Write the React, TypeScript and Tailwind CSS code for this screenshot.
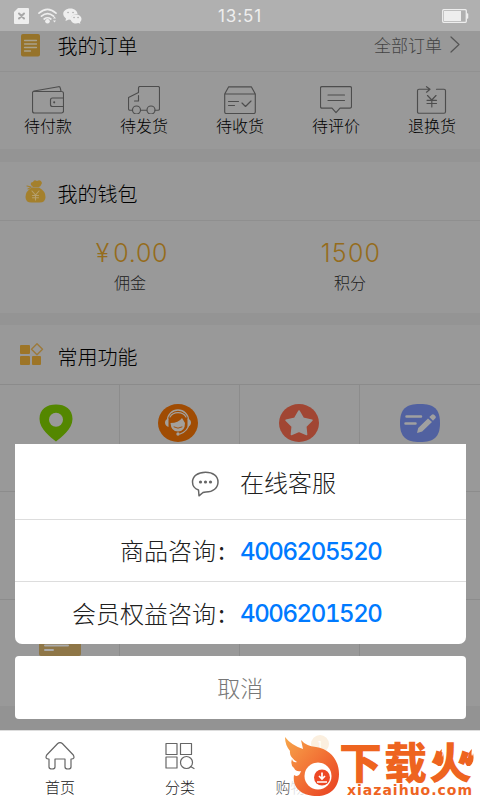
import React from 'react';

const Svg = ({ w, h, children, className = '' }: { w: number, h: number, children: React.ReactNode, className?: string }) => (
  <svg width={w} height={h} viewBox={`0 0 ${w} ${h}`} fill="none" strokeLinecap="round" strokeLinejoin="round" className={`shrink-0 ${className}`}>
    {children}
  </svg>
);

const orders = [
  {
    label: '待付款',
    icon: (
      <>
        <path d="M2 5.500h27.500q2 0 2 2v17.500q0 2-2 2h-27q-2 0-2-2v-18q0-1.500 1.500-2L26.500.7q1.500-.2 1.700 1l.8 3.500" />
        <path d="M31.500 12h-11q-2 0-2 2v4.500q0 2 2 2h11" />
        <circle cx="22.200" cy="16.300" r=".5" />
      </>
    ),
  },
  {
    label: '待发货',
    icon: (
      <>
        <path d="M4.500 24.200H2q-1.500 0-1.500-1.500V11.500l10-5V2q0-1.500 1.500-1.500h18q1.500 0 1.500 1.500v20.700q0 1.500-1.500 1.500h-3M12.500 24.200h6M10.500 9.500v5.500h-4" />
        <circle cx="8.500" cy="24" r="4" />
        <circle cx="23" cy="24" r="4" />
      </>
    ),
  },
  {
    label: '待收货',
    icon: (
      <path d="M.7 8v18q0 1.500 1.500 1.500h27.600q1.500 0 1.500-1.500V8L27.300.8H4.700L.7 8h30.600M4.500 15.500h10M4.500 19.500h6M18 17l3.500 3.500 5.500-5.500" />
    ),
  },
  {
    label: '待评价',
    icon: (
      <path d="M2 .6h28q1.500 0 1.500 1.500v18.500q0 1.500-1.500 1.500H20l-4 4.500-4-4.500H2q-1.500 0-1.500-1.500V2Q.5.600 2 .6ZM8 9h16.500M8 14.500h16.500" />
    ),
  },
  {
    label: '退换货',
    icon: (
      <path d="M20.500 3.200H28q1.500 0 1.500 1.500v21q0 1.500-1.500 1.500H3q-1.500 0-1.500-1.500v-21Q1.500 3.200 3 3.200h11M10.500.7l3.500 2.500-3.500 3M11.500 9.500l4.300 4.500 4.200-4.500M15.800 14v7M11 14.300h9.500M11 17.500h9.500" />
    ),
  },
];

const features = [
  <Svg w={34} h={38} key="pin" className="ml-[-7px]">
    <path d="M17 37.500C12 33.500.5 25 .5 15 .5 5 8 .5 17 .5S33.500 5 33.500 15C33.500 25 22 33.500 17 37.500Z" fill="#548700" />
    <circle cx="17" cy="15.700" r="7" fill="#999" />
  </Svg>,
  <Svg w={40} h={38} key="service" className="ml-[-3px]">
    <ellipse cx="20" cy="19" rx="20" ry="19" fill="#a04c03" />
    <path d="M9.500 16a10.500 10 0 0 1 21 0M31 20q-1 7-9 10" stroke="#a3a09c" strokeWidth="1.300" />
    <path d="M12 13a9 8 0 0 1 16 0" stroke="#a3a09c" strokeWidth="1.200" />
    <path d="M10.500 14.500q-3.500 1-3.500 4t3.500 4.500ZM29.500 14.500q3.500 1 3.500 4t-3.500 4.500Z" fill="#a3a09c" />
    <path d="M12.500 19q8 0 11.500-5l3 5q0 8.500-7 8.500t-7.500-8.500Z" fill="#a3a09c" />
    <path d="M16 23q4 2.500 8 0" stroke="#a04c03" strokeWidth=".9" />
    <circle cx="20" cy="30" r="1.700" fill="#a3a09c" />
  </Svg>,
  <Svg w={40} h={38} key="star" className="ml-[-1px]">
    <ellipse cx="20" cy="19" rx="20" ry="19" fill="#a14633" />
    <path d="m20 7 4.200 7.200 8.800 2-6.200 6.200.8 8.100L20 27.300l-7.600 3.200.8-8.100L7 16.200l8.800-2Z" fill="#999" stroke="#999" strokeWidth="1.500" />
  </Svg>,
  <Svg w={40} h={38} key="write">
    <path d="M20 0C34 0 40 5 40 19S34 38 20 38 0 33 0 19 6 0 20 0Z" fill="#5161a0" />
    <path d="M6.500 12.500h14.500M5.500 19.500h10" stroke="#a0a0a0" strokeWidth="2.500" />
    <path d="m17 29 1.200-5L28 14.500l4 3.500-9.800 9.500ZM29.300 13l2.500-2.300q1.200-1 2.300 0l1.300 1.300q1 1.200 0 2.300L33 16.700Z" fill="#a0a0a0" />
  </Svg>,
  null, null, null, null,
  <Svg w={42} h={38} key="card" className="mt-[-1px]">
    <rect width="42" height="38" rx="2" fill="#8e7647" />
    <path d="M6 27.500h23M6 32h8" stroke="#aaa" strokeWidth="2" />
  </Svg>,
  null, null, null,
];

const SectionTitle = ({ icon, title, className }: { icon: React.ReactNode, title: string, className: string }) => (
  <div className={`flex shrink-0 items-center pl-5 text-[20px] font-light text-black ${className}`}>
    <div className="w-[37.500px]">{icon}</div>
    <span className="leading-none">{title}</span>
  </div>
);

const PhoneRow = ({ label, phone, className = '' }: { label: string, phone: string, className?: string }) => (
  <div className={`flex h-[62px] items-center ${className}`}>
    <span className="mt-[-1px] w-[215px] text-right">{label}<span className="inline-block w-[14px] pr-[5px] font-normal">:</span></span>
    <span className="mt-[2px] ml-[10px] font-[Inter,sans-serif] font-medium tracking-[-1.400px] text-[#007aff] tabular-nums">{phone}</span>
  </div>
);

const Flame = () => (
  <svg width="57" height="64" viewBox="0 0 57 64" className="shrink-0">
    <defs>
      <linearGradient id="flame" x1="0" y1="0" x2="1" y2="1">
        <stop offset="0" stopColor="#f7a64b" />
        <stop offset=".5" stopColor="#f27235" />
        <stop offset="1" stopColor="#e83e20" />
      </linearGradient>
    </defs>
    <path d="M1 2Q7 10 19 14L17 5Q22 11 32 12C46 14 55 25 55 39 55 53 46 61 33 61 18 61 8 53 10 40Q15 43 17 36 12 37 10 33 6 30 8 24 9 28 13 27 5 22 6 16 1 10 1 2Z" fill="url(#flame)" />
    <circle cx="34" cy="41" r="13.500" fill="#fff" />
    <circle cx="38" cy="42.500" r="8" fill="#ed4825" />
    <path d="M38 37.500v6m-3-2.500 3 3 3-3M33 47h10" fill="none" stroke="#fff" strokeWidth="1.700" />
  </svg>
);

const App = () => (
  <div className="relative flex h-[800px] w-[480px] flex-col overflow-hidden bg-[#999] font-['Noto_Sans_CJK_SC',sans-serif] text-[#202020]">
    {/* Status bar */}
    <header className="flex h-[31px] shrink-0 items-center bg-[#b0b0b0] pr-[11px] pl-[14px] text-[#eee]">
      <Svg w={15} h={16}>
        <path d="M4 0h10q1 0 1 1v14q0 1-1 1H1q-1 0-1-1V4Z" fill="#eee" />
        <path d="m5 5.500 5 5m0-5-5 5" stroke="#a8a8a8" strokeWidth="2" />
      </Svg>
      <Svg w={20} h={16} className="ml-[9px]">
        <path d="M1 5.200q8.500-7.500 17 0M3.500 8.200q6-5 12 0M6.200 11q3.300-2.500 6.600 0" stroke="#eee" strokeWidth="1.700" />
        <circle cx="9.500" cy="13.300" r="2.300" fill="#eee" />
        <path d="m15 10.500 1.500-2 1.500 2ZM15 12.500l1.500 2 1.500-2Z" fill="#eee" />
      </Svg>
      <Svg w={19} h={16} className="ml-[5px]">
        <path d="M7.500.5c4 0 7 2.500 7 5.500-4 0-7 2.500-6.500 6L6 11.500 2.500 13 3 10.500C-2 7 0 .5 7.500.5Z" fill="#eee" />
        <path d="M13 6.500c3 0 5.500 2 5.500 4.500q0 2-1.500 3.200l.3 1.600-2-.7q-1.200.4-2.300.4c-3 0-5.300-2-5.300-4.500s2.300-4.500 5.300-4.500Z" fill="#eee" />
        <path d="M5 4.500h.1M10 4.500h.1M11 9.500h.1M15 9.500h.1" stroke="#aaa" strokeWidth="1.500" />
      </Svg>
      <span className="ml-[136px] flex-1 pt-[2px] font-[Inter,sans-serif] text-[17px] leading-none tracking-[0.900px]">13:51</span>
      <Svg w={27} h={14}>
        <rect x=".7" y=".7" width="23.600" height="12.600" rx="1" stroke="#eee" strokeWidth="1.300" />
        <path d="M2 2h17v10H2Z" fill="#eee" />
        <path d="M25.500 5v4" stroke="#eee" strokeWidth="1.500" />
      </Svg>
    </header>

    {/* Orders */}
    <div className="flex h-[41px] shrink-0 items-start justify-between border-b border-[#919191] pr-[20px]">
      <SectionTitle
        className="mt-[3px] h-[23px]"
        title="我的订单"
        icon={
          <Svg w={21} h={23} className="ml-px">
            <rect width="19" height="22.500" rx="2" fill="#96732a" />
            <path d="M3.500 6.500h12M3.500 10h12M3.500 13.500h12M3.500 17h6" stroke="#aaa28c" strokeWidth="1.300" />
          </Svg>
        }
      />
      <div className="mt-[5px] flex items-center gap-[8px] text-[17px] leading-none font-light text-[#444]">
        全部订单
        <Svg w={10} h={17}><path d="m1 1 8 7.500L1 16" stroke="#555" strokeWidth="1.200" /></Svg>
      </div>
    </div>
    <div className="grid h-[77px] shrink-0 grid-cols-5 pt-[14px]">
      {orders.map(order => (
        <div key={order.label} className="flex flex-col items-center gap-[2px]">
          <Svg w={32} h={28}><g stroke="#4d4d4d" strokeWidth="1.150">{order.icon}</g></Svg>
          <span className="text-[16px] leading-[18px] font-light text-black">{order.label}</span>
        </div>
      ))}
    </div>
    <div className="h-[13px] shrink-0 bg-[#949494]" />

    {/* Wallet */}
    <SectionTitle
      className="h-[59px] border-b border-[#8f8f8f] pt-[5px]"
      title="我的钱包"
      icon={
        <Svg w={21} h={24} className="mt-[-3px] ml-[5px]">
          <path d="M6 5Q5 2 8 2q1-3 4-1 4-2 5 2-1 3-3 4H8ZM7 7.500h7Q20.500 11 20.500 17q0 5.500-6 5.500h-8Q.5 22.500.5 17 .5 11 7 7.500Z" fill="#a4802c" />
          <path d="m7 11 3.500 4 3.500-4M10.500 15v5M7.500 15.500h6M7.500 17.700h6" stroke="#b6a06e" strokeWidth="1.100" />
          <path d="m2 6 4 1M3 9l3-1.500" stroke="#a4802c" strokeWidth="1.100" />
        </Svg>
      }
    />
    <div className="flex h-[92px] shrink-0 pr-[20px] pl-[20px] text-center">
      <div className="w-[220px] pt-[19px]">
        <div className="flex h-[26px] items-center justify-center gap-[4px] font-[Inter,sans-serif] text-[25px] leading-[26px] text-[#956c1c]">
          <span className="font-light">¥</span>
          <span className="mr-[-4px] font-light tracking-[0.700px]">0.00</span>
        </div>
        <div className="mt-[8px] text-[16px] leading-[17px] font-light">佣金</div>
      </div>
      <div className="w-[220px] pt-[19px]">
        <div className="h-[26px] pl-[2px] font-[Inter,sans-serif] text-[25px] leading-[26px] font-light tracking-[1.200px] text-[#956c1c]">1500</div>
        <div className="mt-[8px] text-[16px] leading-[17px] font-light">积分</div>
      </div>
    </div>
    <div className="h-[12px] shrink-0 bg-[#949494]" />

    {/* Common features */}
    <SectionTitle
      className="h-[60px] border-b border-[#8b8b8b] pt-[5px]"
      title="常用功能"
      icon={
        <Svg w={24} h={23} className="mt-[-5px]">
          <path d="M1 2h8q1 0 1 1v7q0 1-1 1H1q-1 0-1-1V3Q0 2 1 2ZM1 13h8q1 0 1 1v7q0 1-1 1H1q-1 0-1-1v-7q0-1 1-1ZM13 13h7q1 0 1 1v7q0 1-1 1h-7q-1 0-1-1v-7q0-1 1-1Z" fill="#9d7527" />
          <path d="m17 .8 5.500 5.500-5.500 5.500-5.500-5.500Z" stroke="#9d7a3a" strokeWidth="1.400" />
        </Svg>
      }
    />
    <div className="grid h-[321px] shrink-0 grid-cols-4 grid-rows-[107px_108px_106px]">
      {features.map((icon, i) => (
        <div key={i} className="flex justify-center border-r border-b border-[#8c8c8c] pt-[19px] nth-[4n]:border-r-0 nth-[n+9]:border-b-0">{icon}</div>
      ))}
    </div>
    <div className="h-[24px] shrink-0 bg-[#939393]" />

    {/* Bottom tabs */}
    <nav className="grid h-[70px] shrink-0 grid-cols-4 border-t border-[#ddd] bg-white pt-[11px] text-[15px] leading-[18px] font-light">
      <div className="flex flex-col items-center gap-[8px]">
        <Svg w={30} h={28}>
          <path d="M12.700 1.500q2.300-1.800 4.600 0l11 11.500q2 4-2 4H26v8q0 2-3 2t-3-2v-8H10v8q0 2-3 2t-3-2v-8h-.3q-4 0-2-4Z" stroke="#666" strokeWidth="1.200" />
        </Svg>
        首页
      </div>
      <div className="flex flex-col items-center gap-[8px]">
        <Svg w={30} h={28}>
          <path d="M1 1.500h11v11H1ZM15.500 1.500h11v11h-11ZM1 15h11v11H1ZM25.500 24.500l3.500 2" stroke="#666" strokeWidth="1.200" />
          <circle cx="21.500" cy="20.500" r="6" stroke="#666" strokeWidth="1.200" />
        </Svg>
        分类
      </div>
      <div className="flex flex-col items-center pt-[36px] pr-[4px]"><span><span className="text-[#555]">购</span><span className="text-[#ddd]">物车</span></span></div>
      <div />
    </nav>

    {/* Customer service sheet */}
    <div className="absolute top-[444px] left-[15px] w-[450.500px]">
      <div className="h-[200px] overflow-hidden rounded-b-[7px] bg-white text-[24px] leading-none font-light text-[#202020]">
        <div className="flex h-[76px] items-center border-b border-[#ddd] pl-[176px]">
          <Svg w={28} h={26} className="mt-[4px]">
            <path d="M7.500 19Q1.500 17 1.500 11C1.500 5 7 1.200 14.500 1.200S27 5 27 11s-5 10-12 10q-2 0-3 .5L8 24.800Z" stroke="#666" strokeWidth="1.500" />
            <circle cx="9.500" cy="11" r="1.600" fill="#666" /><circle cx="14.500" cy="11" r="1.600" fill="#666" /><circle cx="19.500" cy="11" r="1.600" fill="#666" />
          </Svg>
          <span className="ml-[21px]">在线客服</span>
        </div>
        <PhoneRow label="商品咨询" phone="4006205520" className="border-b border-[#ddd]" />
        <PhoneRow label="会员权益咨询" phone="4006201520" />
      </div>
      <button className="mt-[12px] flex h-[63px] w-full items-center justify-center rounded-[4px] bg-white text-[23px] font-light text-[#777]">取消</button>
    </div>

    {/* Download site mark */}
    <div className="absolute top-[735px] left-[284px] flex">
      <span className="absolute top-0 left-[27px] flex h-[18px] w-[18px] items-center justify-center rounded-full bg-[#fbefdf] text-[11px] text-white">1</span>
      <div className="relative"><Flame /></div>
      <div className="relative flex flex-col text-[#ee641f]">
        <span className="mt-[5px] ml-[-2px] text-[43px] leading-[41px] font-black tracking-[2px] whitespace-nowrap">下载火</span>
        <span className="mt-[2px] ml-[6px] font-['DejaVu_Sans',sans-serif] text-[14px] leading-[14px] font-bold tracking-[1px]">xiazaihuo.com</span>
        <Svg w={42} h={20} className="absolute top-[12px] left-[92px]">
          <path d="M5 19Q0 14 4 8q0 3 1 3 0-6 4-9-1 5 0 8 1-2 1-4 2 9-2 13ZM34 19q-4-5-1-10 0 2 2 2 0-6 4-9-1 5 0 7 1-1 1-3 2 9-3 13Z" fill="#ee641f" />
        </Svg>
      </div>
    </div>
  </div>
);

export default App;
